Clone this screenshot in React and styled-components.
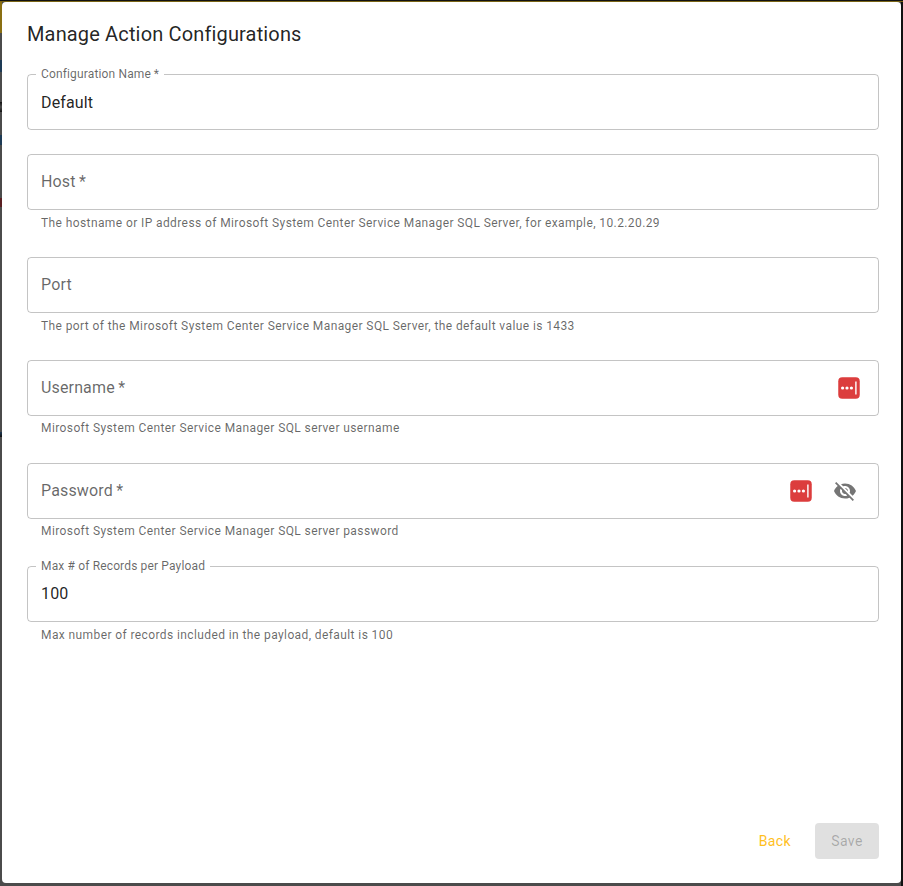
import styled, { createGlobalStyle } from "styled-components";

const GlobalStyle = createGlobalStyle`
    html, body {
        margin: 0;
        padding: 0;
        height: 100%;
        background: #4b4b4b;
    }
    * {
        box-sizing: border-box;
    }
`

// the page behind the dialog only shows as a sliver on the left and top
const Backdrop = styled.div`
    width: 903px;
    height: 886px;
    padding: 2px 2px 3px 2px;
    background:
        linear-gradient(to bottom, #111 0, #111 1px, #7a6516 1px, #7a6516 2px) left top / 100% 2px no-repeat,
        linear-gradient(to bottom,
            #8a6f12 0, #8a6f12 33px,
            transparent 33px, transparent 60px,
            #1d3a55 60px, #1d3a55 72px,
            transparent 72px, transparent 102px,
            #111 102px, #4b4b4b 107px, #111 112px,
            transparent 112px, transparent 135px,
            #1d3a55 135px, #1d3a55 145px,
            transparent 145px, transparent 198px,
            #5a1f22 198px, #5a1f22 207px,
            transparent 207px, transparent 432px,
            #1d3a55 432px, #111 437px,
            transparent 437px) left top / 2px 100% no-repeat,
        linear-gradient(#111, #111) right top / 2px 100% no-repeat,
        #4b4b4b;
    font-family: Roboto, "Liberation Sans", sans-serif;
`

const Dialog = styled.div`
    height: 100%;
    background: #fff;
    border-radius: 4px;
    display: flex;
    flex-direction: column;
    padding: 16px 22px 24px 25px;
`

const Title = styled.h2`
    margin: 0 0 24px 0;
    font-size: 20px;
    font-weight: 400;
    line-height: 32px;
    letter-spacing: 0.15px;
    color: rgba(0, 0, 0, 0.87);
`

const Fields = styled.div`
    display: flex;
    flex-direction: column;
    gap: 24px;
`

const Field = styled.div`
    display: flex;
    flex-direction: column;
`

const InputBox = styled.div`
    position: relative;
    height: 56px;
    display: flex;
    align-items: center;
    padding: 0 14px 2px 14px;
`

const Outline = styled.fieldset`
    position: absolute;
    inset: -5px 0 0 0;
    margin: 0;
    padding: 0 8px;
    border: 1px solid rgba(0, 0, 0, 0.23);
    border-radius: 4px;
    pointer-events: none;
`

const Notch = styled.legend`
    padding: 0;
    height: 11px;
    font-size: 12px;
    line-height: 11px;
    visibility: hidden;
    white-space: nowrap;
    letter-spacing: 0.15px;

    span {
        padding: 0 5px;
    }
`

const FloatLabel = styled.label`
    position: absolute;
    left: 14px;
    top: -7px;
    font-size: 12px;
    line-height: 14px;
    letter-spacing: 0.15px;
    color: rgba(0, 0, 0, 0.6);
`

const Placeholder = styled.span`
    flex: 1;
    font-size: 16px;
    letter-spacing: 0.15px;
    color: rgba(0, 0, 0, 0.6);
`

const Value = styled.span`
    flex: 1;
    font-size: 16px;
    letter-spacing: 0.15px;
    padding-top: ${props => props.$low ? '2px' : '0'};
    color: rgba(0, 0, 0, 0.87);
`

const Helper = styled.p`
    margin: ${props => props.$low ? '3px 14px 0 14px' : '2px 14px 1px 14px'};
    font-size: 12px;
    line-height: 20px;
    letter-spacing: 0.4px;
    color: rgba(0, 0, 0, 0.6);
`

const PassBadge = styled.svg`
    width: 22px;
    height: 22px;
    display: block;
    margin: 2px ${props => props.$gap}px 0 0;
`

const EyeButton = styled.span`
    width: 24px;
    height: 24px;
    margin: 2px 8px 0 21px;
    color: #757575;
    display: flex;
`

const Footer = styled.div`
    margin-top: auto;
    display: flex;
    justify-content: flex-end;
    align-items: center;
    gap: 8px;
`

const Button = styled.button`
    height: 36px;
    min-width: 64px;
    border: 0;
    border-radius: 4px;
    padding: 6px 16px;
    font-family: inherit;
    font-size: 14px;
    font-weight: 400;
    letter-spacing: 0.4px;
    background: ${props => props.disabled ? '#e0e0e0' : 'transparent'};
    color: ${props => props.disabled ? 'rgba(0, 0, 0, 0.26)' : '#ffc01e'};
`

const ManagerIcon = ({ gap = 0 }) => (
    <PassBadge viewBox="0 0 22 22" $gap={gap}>
        <rect x="0.25" y="0.25" width="21.5" height="21.5" rx="4" fill="#dc3d3d" />
        <circle cx="4.6" cy="11" r="1.6" fill="#fff" />
        <circle cx="9" cy="11" r="1.6" fill="#fff" />
        <circle cx="13.4" cy="11" r="1.6" fill="#fff" />
        <rect x="17.2" y="4.5" width="1.4" height="13" fill="#fff" />
    </PassBadge>
)

const EyeOff = () => (
    <svg viewBox="0 0 24 24" width="24" height="24" fill="currentColor">
        <path d="M12 7c2.76 0 5 2.24 5 5 0 .65-.13 1.26-.36 1.83l2.92 2.92c1.51-1.26 2.7-2.89 3.43-4.75-1.73-4.39-6-7.5-11-7.5-1.4 0-2.74.25-3.98.7l2.16 2.16C10.74 7.13 11.35 7 12 7zM2 4.27l2.28 2.28.46.46C3.08 8.3 1.78 10.02 1 12c1.73 4.39 6 7.5 11 7.5 1.55 0 3.03-.3 4.38-.84l.42.42L19.73 22 21 20.73 3.27 3 2 4.27zM7.53 9.8l1.55 1.55c-.05.21-.08.43-.08.65 0 1.66 1.34 3 3 3 .22 0 .44-.03.65-.08l1.55 1.55c-.67.33-1.41.53-2.2.53-2.76 0-5-2.24-5-5 0-.79.2-1.53.53-2.2zm4.31-.78l3.15 3.15.02-.16c0-1.66-1.34-3-3-3l-.17.01z" />
    </svg>
)

const TextField = ({ label, value, helper, low, children }) => (
    <Field>
        <InputBox>
            {value
                ? <>
                    <FloatLabel>{label}</FloatLabel>
                    <Value $low={low && !helper}>{value}</Value>
                </>
                : <Placeholder>{label}</Placeholder>}
            {children}
            <Outline>
                {value && <Notch><span>{label}</span></Notch>}
                {!value && <Notch style={{ width: 0 }} />}
            </Outline>
        </InputBox>
        {helper && <Helper $low={low}>{helper}</Helper>}
    </Field>
)

const App = () => {
    return (
        <Backdrop>
            <GlobalStyle />
            <Dialog>
                <Title>Manage Action Configurations</Title>
                <Fields>
                    <TextField label={"Configuration Name\u2009*"} value="Default" low />
                    <TextField
                        low
                        label={"Host\u2009*"}
                        helper="The hostname or IP address of Mirosoft System Center Service Manager SQL Server, for example, 10.2.20.29"
                    />
                    <TextField
                        low
                        label="Port"
                        helper="The port of the Mirosoft System Center Service Manager SQL Server, the default value is 1433"
                    />
                    <TextField label={"Username\u2009*"} helper="Mirosoft System Center Service Manager SQL server username">
                        <ManagerIcon gap={5} />
                    </TextField>
                    <TextField label={"Password\u2009*"} helper="Mirosoft System Center Service Manager SQL server password">
                        <ManagerIcon />
                        <EyeButton><EyeOff /></EyeButton>
                    </TextField>
                    <TextField
                        low
                        label="Max # of Records per Payload"
                        value="100"
                        helper="Max number of records included in the payload, default is 100"
                    />
                </Fields>
                <Footer>
                    <Button>Back</Button>
                    <Button disabled>Save</Button>
                </Footer>
            </Dialog>
        </Backdrop>
    )
}

export default App
